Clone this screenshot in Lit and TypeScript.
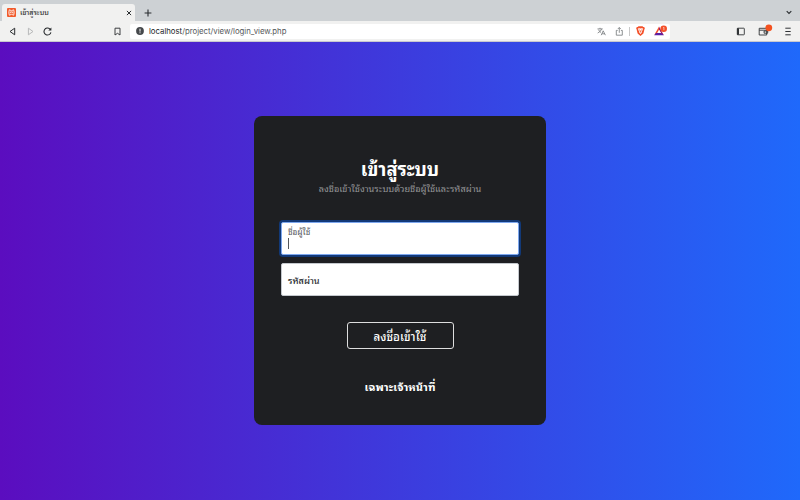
import { LitElement, html, css } from "lit";
import { customElement } from "lit/decorators.js";

@customElement("browser-chrome")
class BrowserChrome extends LitElement {
  static styles = css`
    :host { display: block; height: 42px; flex: none; color: #2f3235; font-family: Inter, "Noto Sans Thai Looped", Loma, "Noto Sans Thai", sans-serif; }
    svg { display: block; overflow: visible; flex: none; }
    .strip { height: 21px; display: flex; align-items: flex-end; background: #cdd1d4; box-sizing: border-box; padding: 0 8px 0 2px; }
    .tab { width: 133px; height: 17px; box-sizing: border-box; padding: 0 3px 0 5px; background: #f1f1f0; border-radius: 3px 3px 0 0; display: flex; align-items: center; }
    .title { font-size: 7px; line-height: 12px; font-weight: 500; color: #333; margin-left: 4px; flex: 1; white-space: nowrap; }
    .plus { margin: 0 0 4px 9px; }
    .chevron { margin: 0 0 6px auto; }
    .bar { height: 20px; display: flex; align-items: center; background: #f1f1f0; border-bottom: 1px solid #c9c9ce; box-sizing: content-box; }
    .nav { width: 130px; box-sizing: border-box; padding: 0 8px 0 8px; display: flex; align-items: center; gap: 8.5px; }
    .mark { margin-left: auto; }
    .address { width: 540px; height: 15px; box-sizing: border-box; padding: 0 5px 0 6px; background: #fff; border-radius: 2px; display: flex; align-items: center; }
    .url { font-size: 7.8px; line-height: 12px; margin-left: 5px; flex: 1; color: #55585b; white-space: nowrap; letter-spacing: -0.02px; }
    .host { color: #242729; }
    .tools { display: flex; align-items: center; }
    .rule { width: 1px; height: 9px; background: #c8c8c8; margin: 0 6px 0 6px; }
    .shield { margin-right: 9px; }
    .actions { flex: 1; display: flex; align-items: center; justify-content: flex-end; padding-right: 8px; gap: 13px; }
  `;
  render() {
    return html`
      <div class="strip">
        <div class="tab">
          <svg width="9" height="9" viewBox="0 0 9 9"><rect width="9" height="9" rx="1" fill="#f15a2b"/><path d="M2.3 1.8L4.5 2.7L6.7 1.8L7.2 4.5L6.7 7.2M2.3 1.8L1.8 4.5L2.3 7.2L4.5 6.3L6.7 7.2M3.2 5.3V4H5.8V5.3" fill="none" stroke="#fff" stroke-width=".8"/></svg>
          <span class="title">เข้าสู่ระบบ</span>
          <svg width="6" height="6" viewBox="0 0 6 6"><path d="M.9 .9L5.1 5.1M5.1 .9L.9 5.1" stroke="#292c2f" stroke-width="1"/></svg>
        </div>
        <svg class="plus" width="8" height="8" viewBox="0 0 8 8"><path d="M4 .6V7.4M.6 4H7.4" stroke="#292c2f" stroke-width="1.1"/></svg>
        <svg class="chevron" width="6" height="5" viewBox="0 0 6 5"><path d="M.7 1.2L3 3.5L5.3 1.2" fill="none" stroke="#292c2f" stroke-width="1.1"/></svg>
      </div>
      <div class="bar">
        <div class="nav">
          <svg width="9" height="9" viewBox="0 0 9 9"><path d="M6.7 1.2V7.8L2 4.5Z" fill="none" stroke="#292c2f" stroke-linejoin="round"/></svg>
          <svg width="9" height="9" viewBox="0 0 9 9"><path d="M2.4 1.2V7.8L7 4.5Z" fill="none" stroke="#b7b8b9" stroke-linejoin="round"/></svg>
          <svg width="9" height="9" viewBox="0 0 9 9"><path d="M7.9 5.3A3.5 3.5 0 1 1 6.8 1.9L7.5 2.6" fill="none" stroke="#292c2f" stroke-width="1.1"/><path d="M8.4.5V3.6H5.3Z" fill="#292c2f"/></svg>
          <svg class="mark" width="9" height="9" viewBox="0 0 9 9"><path d="M2 1.2H7V8L4.5 6.3L2 8Z" fill="none" stroke="#3c3e41" stroke-linejoin="round"/></svg>
        </div>
        <div class="address">
          <svg width="8" height="8" viewBox="0 0 8 8"><circle cx="4" cy="4" r="3.9" fill="#45484b"/><path d="M4 1.7V4.6M4 5.3V6.3" stroke="#fff" stroke-width="1"/></svg>
          <span class="url"><span class="host">localhost</span>/project/view/login_view.php</span>
          <div class="tools">
            <svg width="9" height="9" viewBox="0 0 9 9"><path d="M.5 1.9H5.7M3 .8V1.9M4.7 1.9Q4 4.5 .7 6M1.5 2.7Q2.3 4.5 4 5.5M4.2 8.2L6.2 3.8L8.4 8.2M5 6.8H7.7" fill="none" stroke="#74777a" stroke-width=".8"/></svg>
            <svg width="17" height="9" viewBox="-9 0 17 9"><path d="M2.7 3.4H1.3V8.2H7.3V3.4H5.9M4.3 5.8V.6M2.8 2L4.3 .5L5.8 2" fill="none" stroke="#74777a" stroke-width=".8"/></svg>
            <div class="rule"></div>
            <svg class="shield" width="9" height="10" viewBox="0 0 9 10"><path d="M2.5.2H6.5L7.3 1L8.1.9L8.9 2.2L8.5 3L7.4 7.6L4.5 9.9L1.6 7.6L.5 3L.1 2.2L.9.9L1.7 1Z" fill="#f4512a"/><path d="M1.8 2.5L3.5 2.3L4.5 2.6L5.5 2.3L7.2 2.5L6.2 5L5.7 5.6L5.9 6.4L4.5 8L3.1 6.4L3.3 5.6L2.8 5Z" fill="#fff"/><path d="M2.8 3.6L4 4.2L4.5 6L5 4.2L6.2 3.6M3.7 6.7L4.5 6.2L5.3 6.7" fill="none" stroke="#f4512a" stroke-width=".55"/></svg>
            <svg width="11" height="10" viewBox="0 0 11 10"><path d="M5 .6L.4 8.8H5Z" fill="#f4512a"/><path d="M.2 9.2L2 6.9H8L9.8 9.2Z" fill="#5a20a5"/><path d="M5 .6L9.8 9.2L7 7L5 3.8Z" fill="#a01c68"/><path d="M5 3.8L6.9 7H3.1Z" fill="#fff"/><circle cx="9.7" cy="2.7" r="3.3" fill="#f4512a"/><path d="M9.3 1.7L9.9 1.2V4.2" fill="none" stroke="#fff" stroke-width=".6"/></svg>
          </div>
        </div>
        <div class="actions">
          <svg width="9" height="9" viewBox="0 0 9 9"><rect x="1.3" y="1.2" width="7" height="6.6" rx=".5" fill="none" stroke="#303336" stroke-width=".9"/><path d="M1 1.2H3V7.8H1Z" fill="#303336"/></svg>
          <svg width="13" height="10" viewBox="0 0 13 10"><path d="M1.2 2.3H8.7V9H1.2ZM1.2 4.2H8.7M9.4 5H6.1V7.2H9.7V5Z" fill="none" stroke="#303336" stroke-width=".9"/><circle cx="10.8" cy="1.8" r="3.4" fill="#f4511e"/></svg>
          <svg width="8" height="9" viewBox="0 0 8 9"><path d="M1.3 1.2H6.7M1.3 4.5H6.7M1.3 7.8H6.7" stroke="#303336" stroke-width="1"/></svg>
        </div>
      </div>`;
  }
}

@customElement("login-card")
class LoginCard extends LitElement {
  static styles = css`
    :host { display: flex; flex-direction: column; align-items: center; width: 292px; height: 309px; box-sizing: border-box; padding: 39px 27px 0; margin-bottom: 2px; background: #1e1f22; border-radius: 8px; color: #fff; font-family: "Noto Sans Thai Looped", Loma, "Noto Sans Thai", "Noto Sans", sans-serif; }
    div { white-space: nowrap; box-sizing: border-box; }
    .heading { font-size: 18.4px; line-height: 25px; font-weight: 700; }
    .hint { font-size: 9.22px; line-height: 16px; color: #939496; }
    .field { width: 238px; height: 33px; background: #fff; border: 1px solid #c4c8cd; border-radius: 2px; padding: 0 6px; color: #292c2f; font-size: 9.2px; line-height: 31px; font-weight: 500; margin-top: 8px; }
    .active { margin-top: 26px; border-color: #7da7ee; box-shadow: 0 0 0 2px #123978; color: #55585b; font-size: 8.2px; line-height: 12px; font-weight: 400; padding-top: 3px; }
    .caret { width: 1px; height: 11px; background: #55585b; }
    .button { width: 107px; height: 27px; border: 1px solid #dededf; border-radius: 3px; text-align: center; font-size: 11.6px; line-height: 25px; font-weight: 500; margin-top: 26px; }
    .note { font-size: 11.1px; line-height: 20px; font-weight: 700; margin-top: 27px; }
  `;
  render() {
    return html`
      <div class="heading">เข้าสู่ระบบ</div>
      <div class="hint">ลงชื่อเข้าใช้งานระบบด้วยชื่อผู้ใช้และรหัสผ่าน</div>
      <div class="field active">ชื่อผู้ใช้<div class="caret"></div></div>
      <div class="field">รหัสผ่าน</div>
      <div class="button">ลงชื่อเข้าใช้</div>
      <div class="note">เฉพาะเจ้าหน้าที่</div>`;
  }
}

@customElement("app-root")
class AppRoot extends LitElement {
  static styles = css`
    :host { display: flex; flex-direction: column; width: 800px; height: 500px; overflow: hidden; }
    .page { flex: 1; display: flex; align-items: center; justify-content: center; background: linear-gradient(to right, #5b0dbf, #1f69fb); }
  `;
  render() {
    return html`<browser-chrome></browser-chrome><div class="page"><login-card></login-card></div>`;
  }
}
